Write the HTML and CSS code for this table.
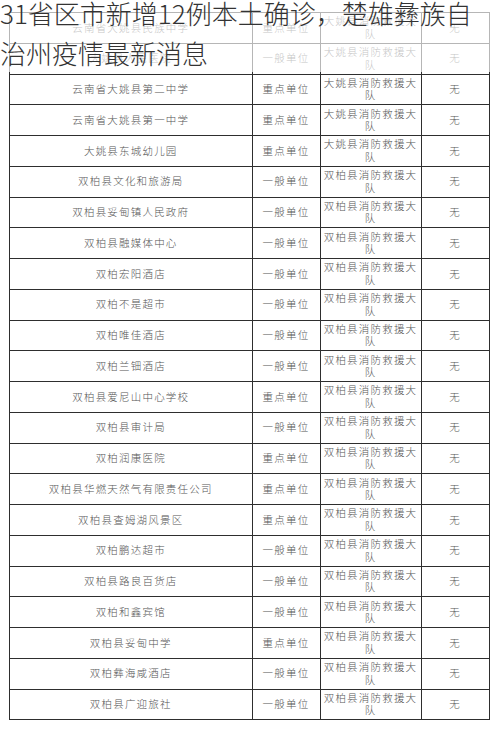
FILE: index.html
```html
<!DOCTYPE html>
<html lang="zh-CN">
<head>
<meta charset="utf-8">
<title>31省区市新增12例本土确诊，楚雄彝族自治州疫情最新消息</title>
<link rel="stylesheet" href="styles.css">
</head>
<body>
<div class="page">
  <div class="sheet">
    <div class="cell">云南省大姚县民族中学</div><div class="cell">重点单位</div><div class="cell team">大姚县消防救援大队</div><div class="cell">无</div>
    <div class="cell">大姚县人民医院</div><div class="cell">一般单位</div><div class="cell team">大姚县消防救援大队</div><div class="cell">无</div>
    <div class="cell">云南省大姚县第二中学</div><div class="cell">重点单位</div><div class="cell team">大姚县消防救援大队</div><div class="cell">无</div>
    <div class="cell">云南省大姚县第一中学</div><div class="cell">重点单位</div><div class="cell team">大姚县消防救援大队</div><div class="cell">无</div>
    <div class="cell">大姚县东城幼儿园</div><div class="cell">重点单位</div><div class="cell team">大姚县消防救援大队</div><div class="cell">无</div>
    <div class="cell">双柏县文化和旅游局</div><div class="cell">一般单位</div><div class="cell team">双柏县消防救援大队</div><div class="cell">无</div>
    <div class="cell">双柏县妥甸镇人民政府</div><div class="cell">一般单位</div><div class="cell team">双柏县消防救援大队</div><div class="cell">无</div>
    <div class="cell">双柏县融媒体中心</div><div class="cell">一般单位</div><div class="cell team">双柏县消防救援大队</div><div class="cell">无</div>
    <div class="cell">双柏宏阳酒店</div><div class="cell">一般单位</div><div class="cell team">双柏县消防救援大队</div><div class="cell">无</div>
    <div class="cell">双柏不是超市</div><div class="cell">一般单位</div><div class="cell team">双柏县消防救援大队</div><div class="cell">无</div>
    <div class="cell">双柏唯佳酒店</div><div class="cell">一般单位</div><div class="cell team">双柏县消防救援大队</div><div class="cell">无</div>
    <div class="cell">双柏兰钿酒店</div><div class="cell">一般单位</div><div class="cell team">双柏县消防救援大队</div><div class="cell">无</div>
    <div class="cell">双柏县爱尼山中心学校</div><div class="cell">重点单位</div><div class="cell team">双柏县消防救援大队</div><div class="cell">无</div>
    <div class="cell">双柏县审计局</div><div class="cell">一般单位</div><div class="cell team">双柏县消防救援大队</div><div class="cell">无</div>
    <div class="cell">双柏润康医院</div><div class="cell">重点单位</div><div class="cell team">双柏县消防救援大队</div><div class="cell">无</div>
    <div class="cell">双柏县华燃天然气有限责任公司</div><div class="cell">重点单位</div><div class="cell team">双柏县消防救援大队</div><div class="cell">无</div>
    <div class="cell">双柏县查姆湖风景区</div><div class="cell">重点单位</div><div class="cell team">双柏县消防救援大队</div><div class="cell">无</div>
    <div class="cell">双柏鹏达超市</div><div class="cell">一般单位</div><div class="cell team">双柏县消防救援大队</div><div class="cell">无</div>
    <div class="cell">双柏县路良百货店</div><div class="cell">一般单位</div><div class="cell team">双柏县消防救援大队</div><div class="cell">无</div>
    <div class="cell">双柏和鑫宾馆</div><div class="cell">一般单位</div><div class="cell team">双柏县消防救援大队</div><div class="cell">无</div>
    <div class="cell">双柏县妥甸中学</div><div class="cell">重点单位</div><div class="cell team">双柏县消防救援大队</div><div class="cell">无</div>
    <div class="cell">双柏彝海咸酒店</div><div class="cell">一般单位</div><div class="cell team">双柏县消防救援大队</div><div class="cell">无</div>
    <div class="cell">双柏县广迎旅社</div><div class="cell">一般单位</div><div class="cell team">双柏县消防救援大队</div><div class="cell">无</div>
  </div>
  <div class="headline">
    <h1 class="headline-text">31省区市新增12例本土确诊，楚雄彝族自治州疫情最新消息</h1>
  </div>
</div>
</body>
</html>
```

FILE: styles.css
```css
html, body {
  margin: 0;
  padding: 0;
  background: #ffffff;
}

.page {
  position: relative;
  width: 500px;
  height: 732px;
  overflow: hidden;
}

.sheet {
  display: grid;
  grid-template-columns: 242.5px 68px 101px 68px;
  grid-auto-rows: 30.76px;
  width: 481px;
  box-sizing: border-box;
  margin: 12px 0 0 9px;
  border-top: 1.5px solid #2e2e2e;
  border-left: 1.5px solid #2e2e2e;
  font-family: "Noto Sans CJK SC", sans-serif;
  font-weight: 300;
  font-size: 10.5px;
  letter-spacing: 1.2px;
  color: #555555;
}

.cell {
  display: flex;
  align-items: center;
  justify-content: center;
  text-align: center;
  line-height: 12.5px;
  border-right: 1.5px solid #2e2e2e;
  border-bottom: 1.5px solid #2e2e2e;
  box-sizing: border-box;
  overflow: hidden;
}

.team {
  padding: 0 2px;
}

.headline {
  position: absolute;
  top: 0;
  left: 0;
  width: 500px;
  height: 72px;
  background: rgba(255, 255, 255, 0.65);
}

.headline-text {
  margin: 0;
  padding: 0;
  position: relative;
  top: -7px;
  width: 490px;
  font-family: "Noto Sans CJK SC", sans-serif;
  font-weight: 300;
  font-size: 26px;
  line-height: 40px;
  color: #333333;
}
```
